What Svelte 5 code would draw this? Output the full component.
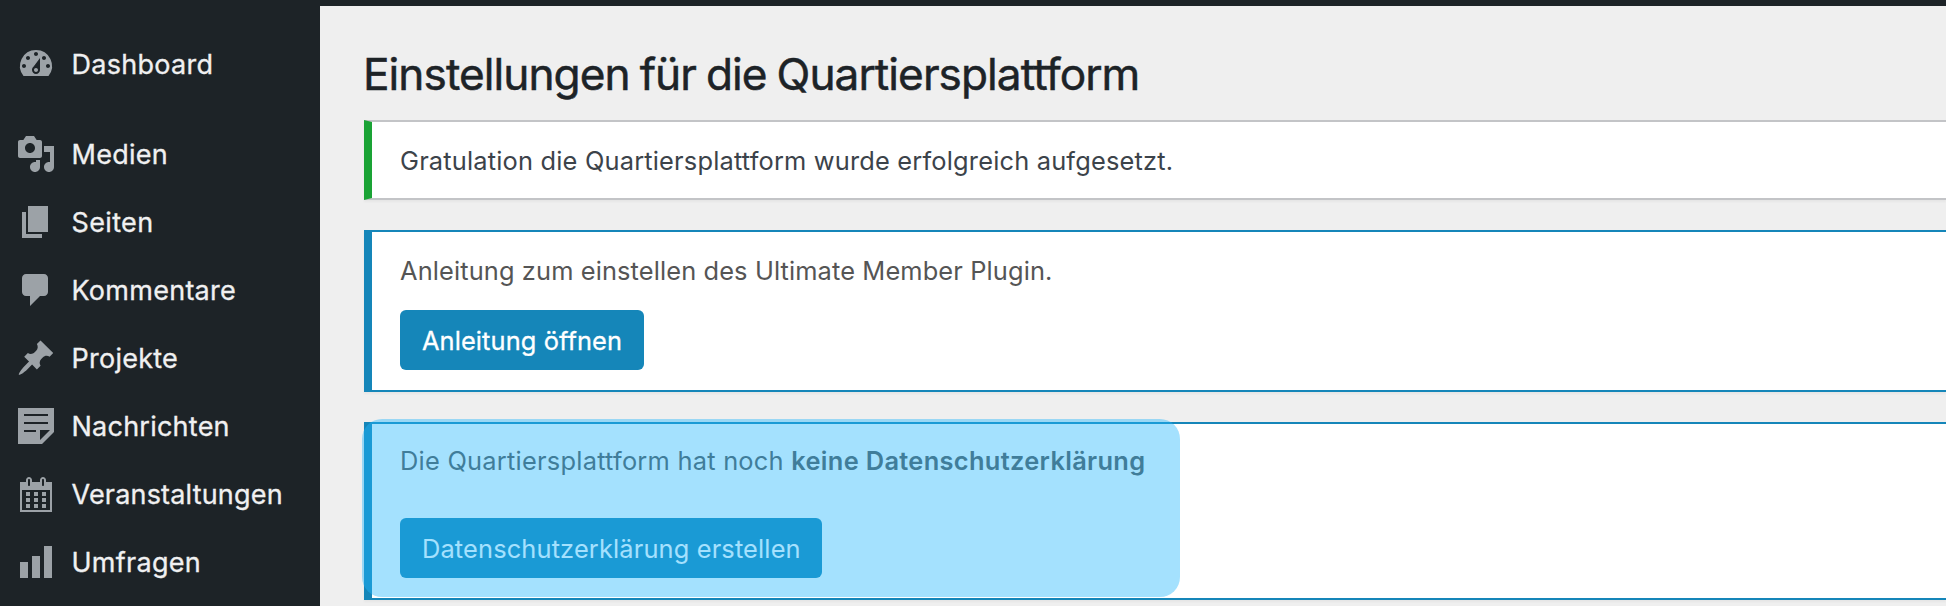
<script>
  const menu = [
    {
      label: 'Dashboard',
      spacing: 0.27,
      separated: true,
      icon: 'M3.76 16h12.48A7.998 7.998 0 0 0 10 3a7.998 7.998 0 0 0-6.24 13zM10 4c.55 0 1 .45 1 1s-.45 1-1 1-1-.45-1-1 .45-1 1-1zM6 6c.55 0 1 .45 1 1s-.45 1-1 1-1-.45-1-1 .45-1 1-1zm8 0c.55 0 1 .45 1 1s-.45 1-1 1-1-.45-1-1 .45-1 1-1zm-5.37 5.55L12 7v6c0 1.1-.9 2-2 2s-2-.9-2-2c0-.57.24-1.08.63-1.45zM4 10c.55 0 1 .45 1 1s-.45 1-1 1-1-.45-1-1 .45-1 1-1zm12 0c.55 0 1 .45 1 1s-.45 1-1 1-1-.45-1-1 .45-1 1-1zm-5 3c0-.55-.45-1-1-1s-1 .45-1 1 .45 1 1 1 1-.45 1-1z'
    },
    {
      label: 'Medien',
      spacing: 0.25,
      icon: 'M13 11V4c0-.55-.45-1-1-1h-1.67L9 1H5L3.67 3H2c-.55 0-1 .45-1 1v7c0 .55.45 1 1 1h10c.55 0 1-.45 1-1zM7 4.5c1.38 0 2.5 1.12 2.5 2.5S8.38 9.5 7 9.5 4.5 8.38 4.5 7 5.62 4.5 7 4.5zM14 6h5v10.5c0 1.38-1.12 2.5-2.5 2.5S14 17.88 14 16.5s1.12-2.5 2.5-2.5c.17 0 .34.02.5.05V9h-3V6zm-4 8.05V13h2v3.5c0 1.38-1.12 2.5-2.5 2.5S7 17.88 7 16.5 8.12 14 9.5 14c.17 0 .34.02.5.05z'
    },
    { label: 'Seiten', spacing: 0.35, icon: 'M6 15V2h10v13H6zm-1 1h8v2H3V5h2v11z' },
    {
      label: 'Kommentare',
      spacing: 0.27,
      icon: 'M5 2h9c1.1 0 2 .9 2 2v7c0 1.1-.9 2-2 2h-2l-5 5v-5H5c-1.1 0-2-.9-2-2V4c0-1.1.9-2 2-2z'
    },
    {
      label: 'Projekte',
      spacing: 0.25,
      icon: 'M10.44 3.02l1.82-1.82 6.36 6.35-1.83 1.82c-1.05-.68-2.48-.57-3.41.36l-.75.75c-.92.93-1.04 2.35-.35 3.41l-1.83 1.82-2.41-2.41-2.8 2.79c-.42.42-3.38 2.71-3.8 2.29s1.86-3.39 2.28-3.81l2.79-2.79L4.1 9.36l1.83-1.82c1.05.69 2.48.57 3.4-.36l.75-.75c.93-.92 1.05-2.35.36-3.41z'
    },
    {
      label: 'Nachrichten',
      spacing: 0.24,
      icon: 'M1 1h18v12l-6 6H1V1zm3 3v1h12V4H4zm0 4v1h12V8H4zm6 5v-1H4v1h6zm2 4l5-5h-5v5z'
    },
    {
      label: 'Veranstaltungen',
      spacing: 0.18,
      icon: 'M15 4h3v15H2V4h3V3c0-.41.15-.76.44-1.06.29-.29.65-.44 1.06-.44s.77.15 1.06.44c.29.3.44.65.44 1.06v1h4V3c0-.41.15-.76.44-1.06.29-.29.65-.44 1.06-.44s.77.15 1.06.44c.29.3.44.65.44 1.06v1zM6 3v2.5c0 .14.05.26.15.36.09.09.21.14.35.14s.26-.05.35-.14c.1-.1.15-.22.15-.36V3c0-.14-.05-.26-.15-.35-.09-.1-.21-.15-.35-.15s-.26.05-.35.15c-.1.09-.15.21-.15.35zm7 0v2.5c0 .14.05.26.14.36.1.09.22.14.36.14s.26-.05.36-.14c.09-.1.14-.22.14-.36V3c0-.14-.05-.26-.14-.35-.1-.1-.22-.15-.36-.15s-.26.05-.36.15c-.09.09-.14.21-.14.35zm4 15V8H3v10h14zM7 9v2H5V9h2zm2 0h2v2H9V9zm4 2V9h2v2h-2zm-6 1v2H5v-2h2zm2 0h2v2H9v-2zm4 2v-2h2v2h-2zm-6 1v2H5v-2h2zm4 2H9v-2h2v2zm4 0h-2v-2h2v2z'
    },
    { label: 'Umfragen', spacing: 0.27, icon: 'M18 18V2h-4v16h4zm-6 0V7H8v11h4zm-6 0v-8H2v8h4z' }
  ];
</script>

<div class="admin">
  <nav class="sidebar">
    {#each menu as item}
      <a class="item" class:separated={item.separated}>
        <svg class="icon" viewBox="0 0 20 20" aria-hidden="true"><path fill-rule="evenodd" d={item.icon} /></svg>
        <span style="letter-spacing: {item.spacing}px">{item.label}</span>
      </a>
    {/each}
  </nav>

  <div class="main">
    <div class="topbar"></div>
    <main class="content">
      <h1>Einstellungen für die Quartiersplattform</h1>

      <section class="notice success">
        <p>Gratulation die Quartiersplattform wurde erfolgreich aufgesetzt.</p>
      </section>

      <section class="notice info">
        <p class="guide">Anleitung zum einstellen des Ultimate Member Plugin.</p>
        <button class="open">Anleitung öffnen</button>
      </section>

      <section class="notice info privacy">
        <p>Die Quartiersplattform hat noch <strong>keine Datenschutzerklärung</strong></p>
        <button class="create">Datenschutzerklärung erstellen</button>
        <div class="highlight"></div>
      </section>
    </main>
  </div>
</div>

<style>
  :global(body) {
    margin: 0;
    overflow: hidden;
  }
  .admin {
    display: flex;
    height: 606px;
    overflow: hidden;
    background: #efefef;
    font-family: Inter, "Open Sans", sans-serif;
    font-size: 25.4px;
  }
  .sidebar {
    flex: none;
    box-sizing: border-box;
    width: 320px;
    padding-top: 30px;
    background: #1d2327;
  }
  .item {
    display: flex;
    align-items: center;
    gap: 15.5px;
    height: 68px;
    padding-left: 16px;
    color: #f0f0f1;
    font-size: 27px;
    line-height: 66px;
    white-space: nowrap;
    -webkit-text-stroke: 0.3px currentColor;
  }
  .item span {
    padding-top: 2px;
  }
  .separated {
    margin-bottom: 22px;
  }
  .icon {
    flex: none;
    width: 40px;
    height: 40px;
    fill: #9ca2a7;
  }
  .main {
    flex: 1;
    min-width: 0;
  }
  .topbar {
    height: 6px;
    background: #1d2327;
  }
  .content {
    padding: 38px 0 0 44px;
  }
  h1 {
    margin: 0 0 16px -1px;
    color: #1d2327;
    font-size: 44.2px;
    font-weight: 400;
    line-height: 60px;
    letter-spacing: -0.95px;
    word-spacing: -1.5px;
    white-space: nowrap;
    -webkit-text-stroke: 0.5px currentColor;
  }
  .notice {
    position: relative;
    box-sizing: border-box;
    margin-bottom: 30px;
    padding-left: 28px;
    border: 2px solid #c3c4c7;
    border-left-width: 8px;
    border-right: 0;
    background: #fff;
    box-shadow: 0 2px 2px rgba(0, 0, 0, 0.04);
  }
  .success {
    height: 80px;
    padding-top: 19px;
    border-left-color: #1aa335;
    color: #3c434a;
  }
  .success p {
    letter-spacing: 0.185px;
  }
  .info {
    padding-top: 19px;
    padding-bottom: 20px;
    border-color: #1586b9;
    color: #555;
  }
  p {
    margin: 0;
    line-height: 39px;
    letter-spacing: 0.244px;
    white-space: nowrap;
  }
  p.guide {
    letter-spacing: 0.12px;
  }
  strong {
    font-weight: 600;
    letter-spacing: 0.332px;
  }
  button {
    display: block;
    box-sizing: border-box;
    height: 60px;
    margin: 20px 0 0;
    padding: 1px 0 0 22px;
    border: 0;
    border-radius: 6px;
    background: #1586b9;
    color: #fff;
    font: inherit;
    text-align: left;
    white-space: nowrap;
  }
  .open {
    width: 244px;
    letter-spacing: 0.1px;
    -webkit-text-stroke: 0.3px currentColor;
  }
  .create {
    width: 422px;
    margin-top: 38px;
    letter-spacing: 0.143px;
  }
  .privacy {
    padding-top: 17px;
  }
  .highlight {
    position: absolute;
    top: -5px;
    left: -10px;
    width: 818px;
    height: 178px;
    border-radius: 20px;
    background: rgba(33, 182, 252, 0.41);
  }
</style>
